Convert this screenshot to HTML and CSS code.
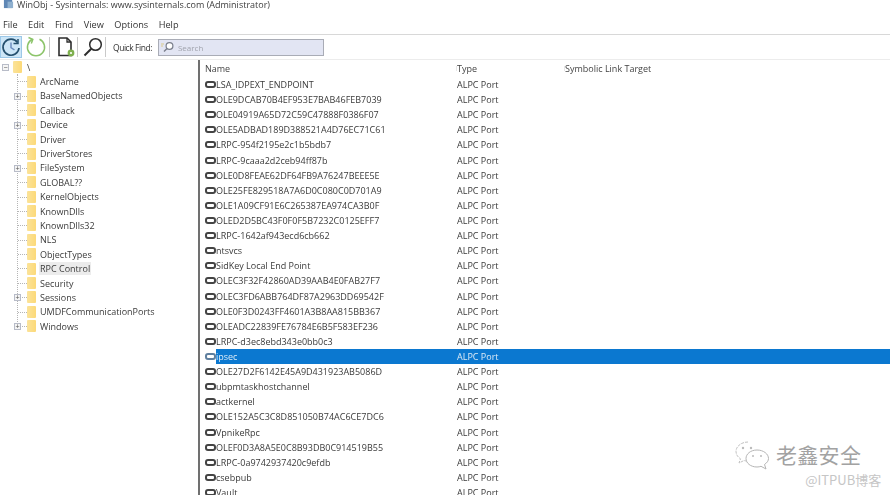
FILE: index.html
```html
<!DOCTYPE html>
<html lang="en">
<head>
<meta charset="utf-8">
<title>WinObj</title>
<link rel="stylesheet" href="styles.css">
</head>
<body>
<div class="app">
  <div class="titlebar">
    <svg class="appicon" viewBox="0 0 12 12"><rect x="1" y="1" width="9" height="10" fill="#5f87b5"/><rect x="5" y="4" width="6" height="7" fill="#8fb0cf"/></svg>
    <span>WinObj - Sysinternals: www.sysinternals.com (Administrator)</span>
  </div>
  <div class="menubar"><span>File</span><span>Edit</span><span>Find</span><span>View</span><span>Options</span><span>Help</span></div>
  <div class="toolbar">
    <div class="tool active">
      <svg viewBox="0 0 22 22" width="22" height="22"><path d="M17.5 6.500A8 8 0 1 0 19 12" fill="none" stroke="#25506e" stroke-width="1.700"/><path d="M13.500 7.500h4.500V3" fill="none" stroke="#25506e" stroke-width="1.500"/><path d="M11 6.500V11.500L14.500 14" fill="none" stroke="#6f8fc0" stroke-width="1.500"/></svg>
    </div>
    <div class="tool">
      <svg viewBox="0 0 22 22" width="22" height="22"><path d="M7.500 3.300A8.600 8.600 0 1 0 14.500 3.300" fill="none" stroke="#8cc46a" stroke-width="1.500"/><path d="M3.500 1.500L7.800 3.300L6.300 7.500" fill="none" stroke="#8cc46a" stroke-width="1.500"/></svg>
    </div>
    <i class="sep"></i>
    <div class="tool doc">
      <svg viewBox="0 0 18 20" width="18" height="20"><path d="M2 1H10L14 5V18.500H2Z" fill="#fff" stroke="#2d2d2d" stroke-width="1.600"/><path d="M10 1V5H14" fill="none" stroke="#2d2d2d" stroke-width="1.300"/><circle cx="14" cy="16" r="3.400" fill="#7fb04f"/><circle cx="14" cy="16" r="1.100" fill="#fff"/></svg>
    </div>
    <i class="sep"></i>
    <div class="tool find">
      <svg viewBox="0 0 20 20" width="20" height="20"><circle cx="12.500" cy="7.500" r="5.800" fill="none" stroke="#2d2d2d" stroke-width="1.500"/><path d="M8.300 11.800L1.500 18.500" stroke="#2d2d2d" stroke-width="2"/></svg>
    </div>
    <i class="sep"></i>
    <span class="qf-label">Quick Find:</span>
    <div class="search">
      <svg viewBox="0 0 14 12" width="14" height="12"><circle cx="8.500" cy="5" r="3.400" fill="#fff" stroke="#7a7f8c" stroke-width="1.200"/><path d="M6 7.500L3 10.500" stroke="#7a7f8c" stroke-width="1.400"/><path d="M0 3h3M0 5h2" stroke="#d9c98a" stroke-width="1"/></svg>
      <span>Search</span>
    </div>
  </div>
  <div class="panes">
    <aside class="tree">
      <div class="root"><b class="box">&minus;</b><i class="folder"></i><span>\</span></div>
      <ul class="nodes">
        <li><i class="folder"></i><span>ArcName</span></li>
        <li class="has"><b class="box">+</b><i class="folder"></i><span>BaseNamedObjects</span></li>
        <li><i class="folder"></i><span>Callback</span></li>
        <li class="has"><b class="box">+</b><i class="folder"></i><span>Device</span></li>
        <li><i class="folder"></i><span>Driver</span></li>
        <li><i class="folder"></i><span>DriverStores</span></li>
        <li class="has"><b class="box">+</b><i class="folder"></i><span>FileSystem</span></li>
        <li><i class="folder"></i><span>GLOBAL??</span></li>
        <li><i class="folder"></i><span>KernelObjects</span></li>
        <li><i class="folder"></i><span>KnownDlls</span></li>
        <li><i class="folder"></i><span>KnownDlls32</span></li>
        <li><i class="folder"></i><span>NLS</span></li>
        <li><i class="folder"></i><span>ObjectTypes</span></li>
        <li class="current"><i class="folder"></i><span>RPC Control</span></li>
        <li><i class="folder"></i><span>Security</span></li>
        <li class="has"><b class="box">+</b><i class="folder"></i><span>Sessions</span></li>
        <li><i class="folder"></i><span>UMDFCommunicationPorts</span></li>
        <li class="has"><b class="box">+</b><i class="folder"></i><span>Windows</span></li>
      </ul>
    </aside>
    <main class="list">
      <div class="head"><span class="c1">Name</span><span class="c2">Type</span><span class="c3">Symbolic Link Target</span></div>
      <div class="row"><i class="port"></i><span class="c1">LSA_IDPEXT_ENDPOINT</span><span class="c2">ALPC Port</span></div>
      <div class="row"><i class="port"></i><span class="c1">OLE9DCAB70B4EF953E7BAB46FEB7039</span><span class="c2">ALPC Port</span></div>
      <div class="row"><i class="port"></i><span class="c1">OLE04919A65D72C59C47888F0386F07</span><span class="c2">ALPC Port</span></div>
      <div class="row"><i class="port"></i><span class="c1">OLE5ADBAD189D388521A4D76EC71C61</span><span class="c2">ALPC Port</span></div>
      <div class="row"><i class="port"></i><span class="c1">LRPC-954f2195e2c1b5bdb7</span><span class="c2">ALPC Port</span></div>
      <div class="row"><i class="port"></i><span class="c1">LRPC-9caaa2d2ceb94ff87b</span><span class="c2">ALPC Port</span></div>
      <div class="row"><i class="port"></i><span class="c1">OLE0D8FEAE62DF64FB9A76247BEEE5E</span><span class="c2">ALPC Port</span></div>
      <div class="row"><i class="port"></i><span class="c1">OLE25FE829518A7A6D0C080C0D701A9</span><span class="c2">ALPC Port</span></div>
      <div class="row"><i class="port"></i><span class="c1">OLE1A09CF91E6C265387EA974CA3B0F</span><span class="c2">ALPC Port</span></div>
      <div class="row"><i class="port"></i><span class="c1">OLED2D5BC43F0F0F5B7232C0125EFF7</span><span class="c2">ALPC Port</span></div>
      <div class="row"><i class="port"></i><span class="c1">LRPC-1642af943ecd6cb662</span><span class="c2">ALPC Port</span></div>
      <div class="row"><i class="port"></i><span class="c1">ntsvcs</span><span class="c2">ALPC Port</span></div>
      <div class="row"><i class="port"></i><span class="c1">SidKey Local End Point</span><span class="c2">ALPC Port</span></div>
      <div class="row"><i class="port"></i><span class="c1">OLEC3F32F42860AD39AAB4E0FAB27F7</span><span class="c2">ALPC Port</span></div>
      <div class="row"><i class="port"></i><span class="c1">OLEC3FD6ABB764DF87A2963DD69542F</span><span class="c2">ALPC Port</span></div>
      <div class="row"><i class="port"></i><span class="c1">OLE0F3D0243FF4601A3B8AA815BB367</span><span class="c2">ALPC Port</span></div>
      <div class="row"><i class="port"></i><span class="c1">OLEADC22839FE76784E6B5F583EF236</span><span class="c2">ALPC Port</span></div>
      <div class="row"><i class="port"></i><span class="c1">LRPC-d3ec8ebd343e0bb0c3</span><span class="c2">ALPC Port</span></div>
      <div class="row selected"><i class="port"></i><div class="bar"><span class="c1">ipsec</span><span class="c2">ALPC Port</span></div></div>
      <div class="row"><i class="port"></i><span class="c1">OLE27D2F6142E45A9D431923AB5086D</span><span class="c2">ALPC Port</span></div>
      <div class="row"><i class="port"></i><span class="c1">ubpmtaskhostchannel</span><span class="c2">ALPC Port</span></div>
      <div class="row"><i class="port"></i><span class="c1">actkernel</span><span class="c2">ALPC Port</span></div>
      <div class="row"><i class="port"></i><span class="c1">OLE152A5C3C8D851050B74AC6CE7DC6</span><span class="c2">ALPC Port</span></div>
      <div class="row"><i class="port"></i><span class="c1">VpnikeRpc</span><span class="c2">ALPC Port</span></div>
      <div class="row"><i class="port"></i><span class="c1">OLEF0D3A8A5E0C8B93DB0C914519B55</span><span class="c2">ALPC Port</span></div>
      <div class="row"><i class="port"></i><span class="c1">LRPC-0a9742937420c9efdb</span><span class="c2">ALPC Port</span></div>
      <div class="row"><i class="port"></i><span class="c1">csebpub</span><span class="c2">ALPC Port</span></div>
      <div class="row"><i class="port"></i><span class="c1">Vault</span><span class="c2">ALPC Port</span></div>
    </main>
  </div>
</div>
<div class="watermark">
  <svg class="wechat" viewBox="0 0 36 30" width="36" height="30"><path d="M14 2C7.500 2 2 6.200 2 11.500C2 14.500 3.800 17 6.500 18.800L5 23L10 20.500C11.500 21 12.500 21 14 21" fill="none" stroke="#c2c2c2" stroke-width="1" stroke-dasharray="3 1"/><path d="M23 10C16.500 10 12 14 12 18.500C12 23 16.500 27 23 27C24.500 27 26 26.700 27 26.300L32 29L30.500 24.500C33 22.800 34.500 20.800 34.500 18.500C34.500 14 29.500 10 23 10Z" fill="#fff" stroke="#b5b5b5" stroke-width="1"/><circle cx="9" cy="8" r="1.200" fill="#bbb"/><circle cx="17" cy="8" r="1.200" fill="#bbb"/><circle cx="19" cy="16" r="1" fill="#bbb"/><circle cx="27" cy="16" r="1" fill="#bbb"/></svg>
  <div class="wm-text">
    <span class="wm-name">老鑫安全</span>
    <span class="wm-sub">@ITPUB博客</span>
  </div>
</div>
</body>
</html>
```
FILE: styles.css
```css
html, body { margin: 0; padding: 0; background: #fff; overflow: hidden; }
body { width: 890px; height: 495px; position: relative; font-family: "Open Sans", "Noto Sans", sans-serif; color: #333; }
.app { width: 890px; height: 495px; display: flex; flex-direction: column; filter: blur(0.45px); }

.titlebar { height: 9px; display: flex; align-items: center; gap: 3px; padding-left: 3px; font-size: 9px; color: #3c3c3c; white-space: nowrap; }
.appicon { width: 11px; height: 11px; margin-top: -3px; }
.titlebar span { margin-top: -1px; }

.menubar { height: 26px; padding: 5px 0 0 3px; display: flex; align-items: center; gap: 10.5px; font-size: 9.2px; color: #333; border-bottom: 1px solid #d8d8d8; box-sizing: border-box; }

.toolbar { height: 25px; display: flex; align-items: center; border-bottom: 1px solid #ececec; box-sizing: border-box; }
.tool { width: 22px; height: 22px; display: flex; align-items: center; justify-content: center; margin-left: 3px; }
.tool.active { margin-left: 0; background: #cde6f7; outline: 1px solid #9cc8e8; outline-offset: -1px; }
.tool.doc { width: 18px; margin-left: 5px; }
.tool.find { width: 20px; margin-left: 3px; }
.sep { width: 1px; height: 20px; background: #c9c9c9; margin: 0 2px; }
.qf-label { font-size: 8.5px; color: #333; margin-left: 5px; white-space: nowrap; letter-spacing: -0.45px; }
.search { width: 166px; height: 17px; box-sizing: border-box; margin-left: 6px; background: #e2e5f3; border: 1px solid #a9acb6; display: flex; align-items: center; gap: 3px; padding-left: 2px; font-size: 8px; color: #a0a3ad; }

.panes { flex: 1; display: flex; min-height: 0; }
.tree { width: 198px; flex: none; border-right: 2px solid #707070; font-size: 9px; color: #3a3a3a; }
.root { height: 14.4px; display: flex; align-items: center; padding-left: 2px; }
.root .box { margin-right: 4px; }
.root span { margin-left: 5px; }
.nodes { list-style: none; margin: 0 0 0 17px; padding: 0; height: 252px; border-left: 1px dotted #b5b5b5; }
.nodes li { height: 14.4px; display: flex; align-items: center; padding-left: 9px; position: relative; white-space: nowrap; }
.nodes li::before { content: ""; position: absolute; left: 0; top: 7px; width: 9px; border-top: 1px dotted #b5b5b5; }
.nodes li span { margin-left: 3px; padding: 0 1px; }
.nodes li.current span { background: #ececec; }
.box { width: 7px; height: 7px; box-sizing: border-box; border: 1px solid #b8bcc8; background: #f5f5f5; font: 400 7px/5px "Liberation Sans", sans-serif; text-align: center; color: #555; flex: none; }
.nodes .box { position: absolute; left: -4px; top: 4px; z-index: 1; }
.folder { width: 9px; height: 12px; flex: none; background: linear-gradient(90deg, #fbe39a, #fcd978); border-radius: 1px; }

.list { flex: 1; min-width: 0; font-size: 9px; color: #3a3a3a; }
.head, .row { display: flex; align-items: center; white-space: nowrap; }
.head { height: 17px; padding-left: 5px; color: #444; }
.head .c1 { width: 252px; flex: none; }
.head .c2 { width: 108px; flex: none; }
.head .c2, .head .c3 { box-shadow: -5px 0 0 -4px #e6e6e6; }
.row { height: 15.12px; padding-left: 5px; }
.row .c1 { width: 241px; flex: none; overflow: hidden; }
.port { width: 11px; height: 7px; box-sizing: border-box; border: 2px solid #444; border-radius: 3px; flex: none; background: #fff; }
.row.selected .port { border-color: #5f7f9e; }
.bar { flex: 1; display: flex; align-items: center; height: 100%; background: #0b78d0; color: #dcebf7; }

.watermark { position: absolute; left: 734px; top: 440px; display: flex; gap: 6px; color: #9a9a9a; }
.wm-text { display: flex; flex-direction: column; align-items: flex-end; font-family: "Noto Sans CJK SC", sans-serif; }
.wm-name { font-size: 21px; line-height: 28px; letter-spacing: 0.3px; color: #a2a2a2; }
.wm-sub { font-size: 13px; line-height: 17px; margin-top: 3px; color: #c6c6c6; margin-right: -20px; white-space: nowrap; }
```
